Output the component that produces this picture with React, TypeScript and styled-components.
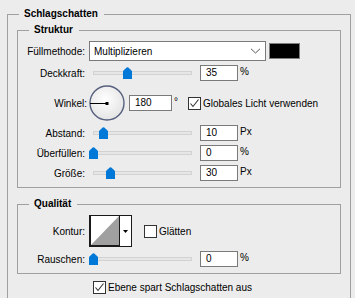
import React from 'react';
import styled, { createGlobalStyle } from 'styled-components';

const GlobalStyle = createGlobalStyle`
  html, body {
    margin: 0;
    padding: 0;
    background: #ececec;
    overflow: hidden;
  }
  body {
    font-family: "Liberation Sans", Arial, sans-serif;
    font-size: 10px;
    color: #000;
  }
`;

const Page = styled.div`
  box-sizing: border-box;
  height: 298px;
  padding: 7px 0 0 7px;
  overflow: hidden;
`;

const Outer = styled.fieldset`
  box-sizing: border-box;
  width: 344px;
  height: 310px;
  margin: 0;
  padding: 2px 9px 0 9px;
  border: 1px solid #a0a0a0;
  min-width: 0;
`;

const Inner = styled.fieldset`
  box-sizing: border-box;
  width: 324px;
  margin: 0;
  padding: 4px 0 6px 0;
  border: 1px solid #a0a0a0;
  min-width: 0;

  & + & {
    margin-top: 9px;
  }
`;

const Legend = styled.legend<{ $offset: number }>`
  margin-left: ${p => p.$offset}px;
  padding: 0 6px 0 5px;
  height: 14px;
  line-height: 14px;
  font-weight: bold;
`;

const Rows = styled.div`
  display: flex;
  flex-direction: column;
  gap: 4px;
`;

const Row = styled.div<{ $h: number }>`
  display: flex;
  align-items: center;
  height: ${p => p.$h}px;
`;

const Label = styled.span<{ $wide?: boolean }>`
  flex-shrink: 0;
  width: ${p => (p.$wide ? 69 : 67)}px;
  margin-right: ${p => (p.$wide ? 2 : 4)}px;
  text-align: right;
  white-space: nowrap;
`;

const Select = styled.div`
  box-sizing: border-box;
  width: 177px;
  height: 20px;
  display: flex;
  align-items: center;
  justify-content: space-between;
  padding: 0 4px 0 4px;
  background: #fff;
  border: 1px solid #7a7a7a;
`;

const Swatch = styled.div`
  box-sizing: border-box;
  width: 31px;
  height: 16px;
  margin-left: 3px;
  background: #000;
  border: 1px solid #7d7d7d;
`;

const SliderBox = styled.div`
  position: relative;
  box-sizing: border-box;
  flex-shrink: 0;
  width: 103px;
  height: 16px;
  padding-left: 4px;
  display: flex;
  align-items: center;
`;

const Track = styled.div`
  flex: 1;
  box-sizing: border-box;
  height: 4px;
  background: #e6e6e6;
  border: 1px solid #d2d2d2;
`;

const ThumbMark = styled.svg`
  position: absolute;
  top: 2px;
`;

const FieldGroup = styled.div<{ $ml: number }>`
  display: flex;
  align-items: flex-start;
  margin-left: ${p => p.$ml}px;
`;

const Field = styled.div<{ $w: number }>`
  box-sizing: border-box;
  flex-shrink: 0;
  width: ${p => p.$w}px;
  height: 16px;
  padding-left: 5px;
  line-height: 14px;
  background: #fff;
  border: 1px solid #7a7a7a;
`;

const Unit = styled.span`
  margin-left: 2px;
  margin-top: 1px;
  line-height: 12px;
`;

const Check = styled.label<{ $ml: number }>`
  display: flex;
  align-items: center;
  margin-left: ${p => p.$ml}px;
  white-space: nowrap;
`;

const CheckBox = styled.span`
  box-sizing: border-box;
  width: 13px;
  height: 13px;
  margin-right: 2px;
  background: #fff;
  border: 1px solid #333;
  display: flex;
  align-items: center;
  justify-content: center;
`;

const Contour = styled.div`
  box-sizing: border-box;
  width: 43px;
  height: 32px;
  display: flex;
  background: #fff;
  border: 1px solid #1a1a1a;
`;

const ContourArrow = styled.div`
  flex: 1;
  border-left: 1px solid #1a1a1a;
  display: flex;
  align-items: center;
  justify-content: center;
`;

const Footer = styled(Row)`
  margin-top: 5px;
  padding-left: 76px;
`;

const Thumb = ({ at }: { at: number }) => (
  <ThumbMark style={{ left: at }} width={9} height={12} viewBox="0 0 9 12">
    <path d="M0 12V4.6Q0 3.8.7 3.2L3.7.5Q4.5-.1 5.3.5L8.3 3.2Q9 3.8 9 4.6V12Z" fill="#0078d7" />
  </ThumbMark>
);

const Slider = ({ at }: { at: number }) => (
  <SliderBox>
    <Track />
    <Thumb at={at} />
  </SliderBox>
);

const Tick = ({ checked, ml, children }: { checked?: boolean; ml: number; children: React.ReactNode }) => (
  <Check $ml={ml}>
    <CheckBox>
      {checked && (
        <svg width={11} height={11} viewBox="0 0 11 11">
          <polyline points="1.5,5.5 4,8.5 9.5,1.5" fill="none" stroke="#333" strokeWidth={1.1} />
        </svg>
      )}
    </CheckBox>
    {children}
  </Check>
);

const NumberField = ({ value, unit, w, ml }: { value: string; unit: string; w: number; ml: number }) => (
  <FieldGroup $ml={ml}>
    <Field $w={w}>{value}</Field>
    <Unit>{unit}</Unit>
  </FieldGroup>
);

const SliderRow = ({ label, at, value, unit }: { label: string; at: number; value: string; unit: string }) => (
  <Row $h={16}>
    <Label>{label}</Label>
    <Slider at={at} />
    <NumberField value={value} unit={unit} w={38} ml={8} />
  </Row>
);

const Dial = () => (
  <svg width={36} height={36} viewBox="0 0 36 36">
    <defs>
      <radialGradient id="dialFill" cx="45%" cy="40%" r="60%">
        <stop offset="0%" stopColor="#ffffff" />
        <stop offset="100%" stopColor="#e4e4e4" />
      </radialGradient>
    </defs>
    <circle cx={18} cy={18} r={17} fill="url(#dialFill)" stroke="#56607e" strokeWidth={1.4} />
    <line x1={1} y1={18.5} x2={18} y2={18.5} stroke="#000" strokeWidth={1} />
    <rect x={16.5} y={17} width={3} height={3} fill="#000" />
  </svg>
);

export default function App() {
  return (
    <>
      <GlobalStyle />
      <Page>
        <Outer>
          <Legend $offset={2}>Schlagschatten</Legend>

          <Inner>
            <Legend $offset={11}>Struktur</Legend>
            <Rows>
              <Row $h={20}>
                <Label>Füllmethode:</Label>
                <Select>
                  <span>Multiplizieren</span>
                  <svg width={11} height={6} viewBox="0 0 11 6">
                    <polyline points="1,0.8 5.5,5 10,0.8" fill="none" stroke="#555" strokeWidth={1} />
                  </svg>
                </Select>
                <Swatch />
              </Row>
              <SliderRow label="Deckkraft:" at={34} value="35" unit="%" />
              <Row $h={36}>
                <Label $wide>Winkel:</Label>
                <Dial />
                <NumberField value="180" unit="°" w={43} ml={4} />
                <Tick checked ml={10}>Globales Licht verwenden</Tick>
              </Row>
              <SliderRow label="Abstand:" at={10} value="10" unit="Px" />
              <SliderRow label="Überfüllen:" at={0} value="0" unit="%" />
              <SliderRow label="Größe:" at={17} value="30" unit="Px" />
            </Rows>
          </Inner>

          <Inner>
            <Legend $offset={11}>Qualität</Legend>
            <Rows>
              <Row $h={32}>
                <Label>Kontur:</Label>
                <Contour>
                  <svg width={29} height={30} viewBox="0 0 29 30">
                    <polygon points="0,30 29,0 29,30" fill="#a0a0a0" />
                    <line x1={0.5} y1={0} x2={0.5} y2={30} stroke="#1a1a1a" />
                    <line x1={0} y1={29.5} x2={29} y2={29.5} stroke="#1a1a1a" />
                  </svg>
                  <ContourArrow>
                    <svg width={5} height={3} viewBox="0 0 5 3">
                      <polygon points="0,0 5,0 2.5,3" fill="#000" />
                    </svg>
                  </ContourArrow>
                </Contour>
                <Tick ml={12}>Glätten</Tick>
              </Row>
              <SliderRow label="Rauschen:" at={0} value="0" unit="%" />
            </Rows>
          </Inner>

          <Footer $h={16}>
            <Tick checked ml={0}>Ebene spart Schlagschatten aus</Tick>
          </Footer>
        </Outer>
      </Page>
    </>
  );
}
